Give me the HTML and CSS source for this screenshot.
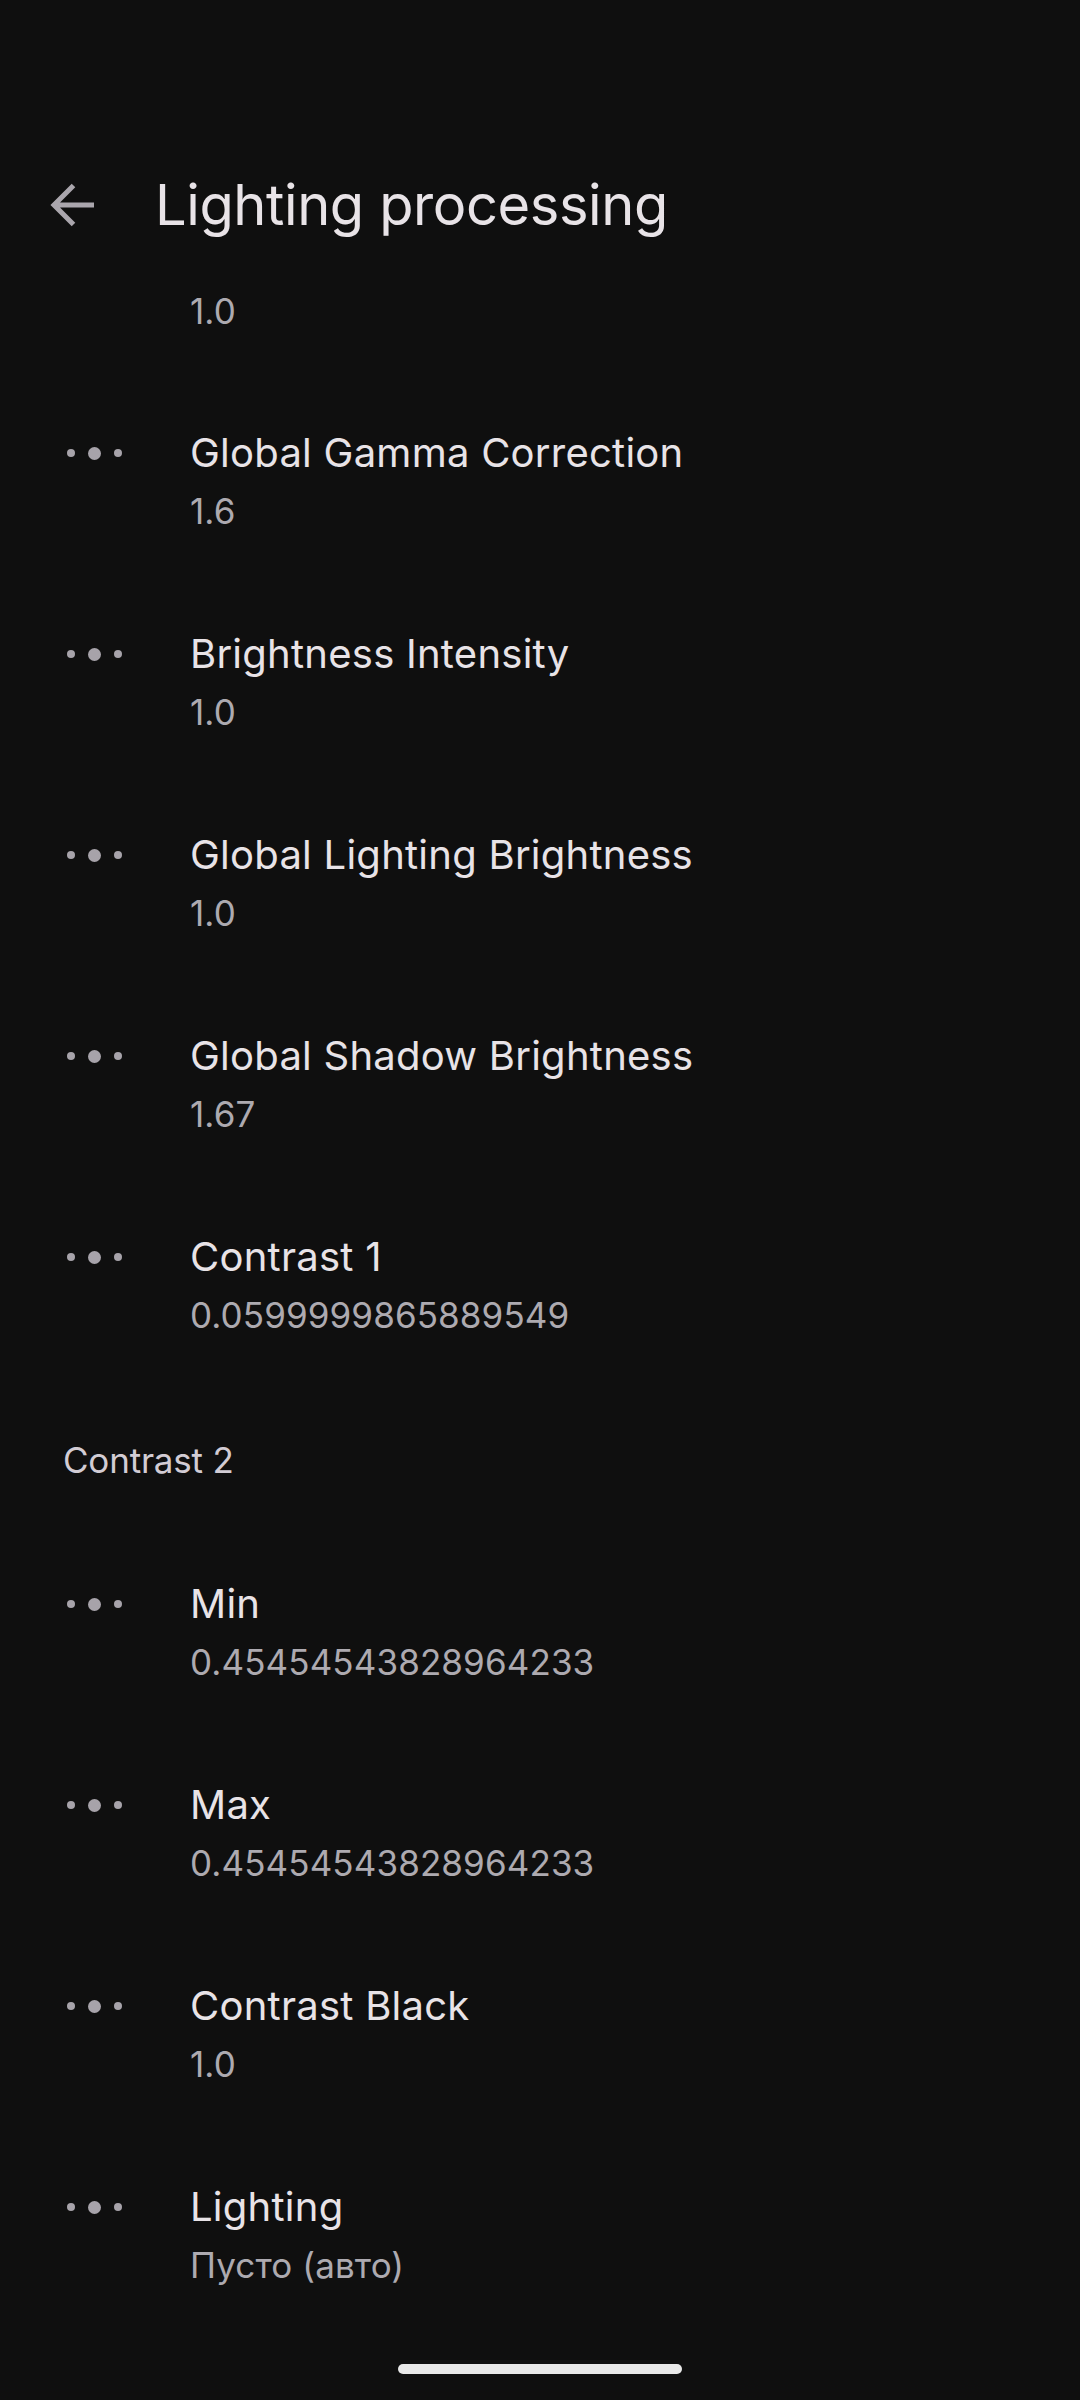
FILE: index.html
```html
<!DOCTYPE html>
<html lang="en">
<head>
<meta charset="utf-8">
<title>Lighting processing</title>
<link rel="stylesheet" href="styles.css">
</head>
<body>
<div class="app">
  <div class="statusbar"></div>
  <header class="topbar">
    <svg class="back" width="48" height="48" viewBox="0 0 48 48" aria-hidden="true">
      <path d="M44 24H4M23.5 4.5L4 24l19.5 19.5" fill="none" stroke="currentColor" stroke-width="5"/>
    </svg>
    <h1 class="title">Lighting processing</h1>
  </header>
  <main class="list">
    <div class="row partial">
      <div class="dots-slot"></div>
      <div class="text"><div class="value">1.0</div></div>
    </div>
    <div class="row">
      <div class="dots"><span class="dot"></span><span class="dot big"></span><span class="dot"></span></div>
      <div class="text"><div class="label">Global Gamma Correction</div><div class="value">1.6</div></div>
    </div>
    <div class="row">
      <div class="dots"><span class="dot"></span><span class="dot big"></span><span class="dot"></span></div>
      <div class="text"><div class="label">Brightness Intensity</div><div class="value">1.0</div></div>
    </div>
    <div class="row">
      <div class="dots"><span class="dot"></span><span class="dot big"></span><span class="dot"></span></div>
      <div class="text"><div class="label">Global Lighting Brightness</div><div class="value">1.0</div></div>
    </div>
    <div class="row">
      <div class="dots"><span class="dot"></span><span class="dot big"></span><span class="dot"></span></div>
      <div class="text"><div class="label">Global Shadow Brightness</div><div class="value">1.67</div></div>
    </div>
    <div class="row">
      <div class="dots"><span class="dot"></span><span class="dot big"></span><span class="dot"></span></div>
      <div class="text"><div class="label">Contrast 1</div><div class="value">0.0599999865889549</div></div>
    </div>
    <div class="section">Contrast 2</div>
    <div class="row">
      <div class="dots"><span class="dot"></span><span class="dot big"></span><span class="dot"></span></div>
      <div class="text"><div class="label">Min</div><div class="value">0.45454543828964233</div></div>
    </div>
    <div class="row">
      <div class="dots"><span class="dot"></span><span class="dot big"></span><span class="dot"></span></div>
      <div class="text"><div class="label">Max</div><div class="value">0.45454543828964233</div></div>
    </div>
    <div class="row">
      <div class="dots"><span class="dot"></span><span class="dot big"></span><span class="dot"></span></div>
      <div class="text"><div class="label">Contrast Black</div><div class="value">1.0</div></div>
    </div>
    <div class="row">
      <div class="dots"><span class="dot"></span><span class="dot big"></span><span class="dot"></span></div>
      <div class="text"><div class="label">Lighting</div><div class="value">Пусто (авто)</div></div>
    </div>
  </main>
  <div class="navbar"><div class="handle"></div></div>
</div>
</body>
</html>
```
FILE: styles.css
```css
html, body {
  margin: 0;
  padding: 0;
  background: #0f0f0f;
}
body {
  width: 1080px;
  height: 2400px;
  overflow: hidden;
  font-family: Inter, Roboto, "Noto Sans", sans-serif;
}
.app {
  display: flex;
  flex-direction: column;
  height: 2400px;
}
.statusbar {
  height: 149px;
  flex: none;
}
.topbar {
  height: 112px;
  flex: none;
  display: flex;
  align-items: center;
  padding-left: 50px;
}
.back {
  color: #aaa6ad;
  flex: none;
}
.title {
  margin: 0 0 0 57px;
  font-size: 56px;
  font-weight: 400;
  color: #e8e3e7;
  line-height: 70px;
  letter-spacing: -0.4px;
}
.list {
  flex: 1;
  overflow: hidden;
  display: flex;
  flex-direction: column;
}
.row {
  flex: none;
  display: flex;
  align-items: flex-start;
  padding: 42px 0 43px 67px;
}
.row.partial {
  padding-top: 20px;
  padding-bottom: 42px;
}
.dots, .dots-slot {
  width: 56px;
  height: 56px;
  flex: none;
  display: flex;
  align-items: center;
  gap: 13px;
}
.dots-slot { height: 0; }
.dot {
  width: 8px;
  height: 8px;
  border-radius: 50%;
  background: #a7a3aa;
  flex: none;
}
.dot.big {
  width: 13px;
  height: 13px;
}
.text {
  margin-left: 67px;
  display: flex;
  flex-direction: column;
}
.label {
  font-size: 40px;
  line-height: 56px;
  color: #e8e3e7;
  letter-spacing: 0.25px;
}
.value {
  font-size: 35px;
  line-height: 60px;
  color: #adaab0;
  letter-spacing: 0.1px;
}
.section {
  flex: none;
  padding: 47px 0 49px 63px;
  font-size: 35px;
  line-height: 50px;
  color: #d2ccd4;
  letter-spacing: -0.2px;
}
.navbar {
  height: 61px;
  flex: none;
  display: flex;
  justify-content: center;
  padding-top: 25px;
  box-sizing: border-box;
}
.handle {
  width: 284px;
  height: 10px;
  border-radius: 5px;
  background: #e8e8e8;
}
```
